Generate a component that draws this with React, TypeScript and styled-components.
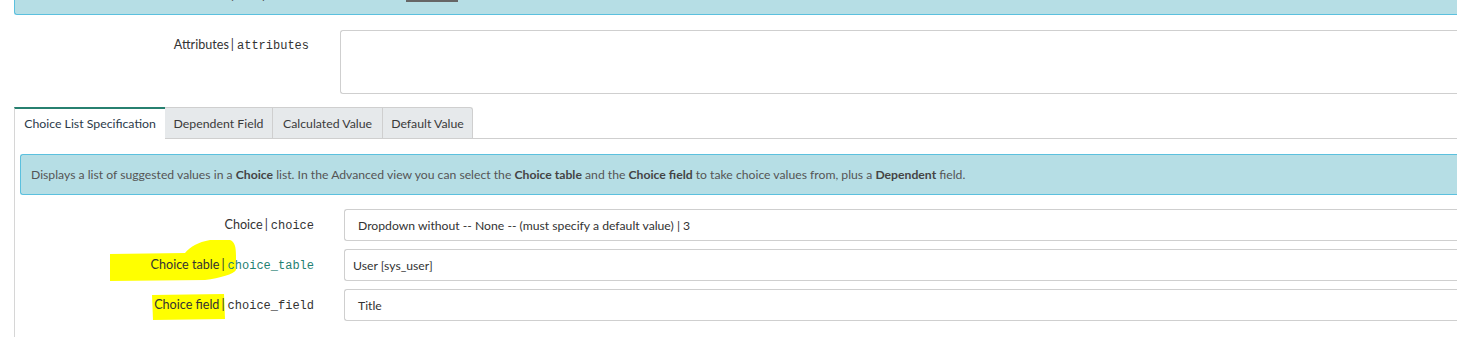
import React from "react";
import styled, { createGlobalStyle } from "styled-components";

const Global = createGlobalStyle`
  html, body { margin: 0; padding: 0; background: #fff; overflow: hidden; }
  body { font-family: Lato, "Noto Sans", "Liberation Sans", sans-serif; color: #333; }
`;

const Page = styled.div`
  width: 1490px;
  height: 337px;
  overflow: hidden;
  display: flex;
  flex-direction: column;
`;

const TopAlert = styled.div`
  flex: none;
  margin-left: 14px;
  height: 14px;
  background: #b6dee5;
  border-left: 1px solid #5bc0de;
  border-bottom: 1px solid #5bc0de;
  border-bottom-left-radius: 3px;
  display: flex;
  align-items: flex-end;
  padding-left: 16px;
  overflow: hidden;
  font-size: 12.2px;
  line-height: 16px;
  color: #555;
  white-space: nowrap;
`;

const TopText = styled.span`
  width: 369px;
  margin-bottom: 11px;
`;

const TopLink = styled.span`
  display: inline-block;
  width: 52px;
  height: 16px;
  border-bottom: 2px solid #666;
  margin-bottom: 12px;
  margin-left: 6px;
`;

const FieldRow = styled.div<{ $labelWidth: number; $gap: number }>`
  display: grid;
  grid-template-columns: ${(p) => p.$labelWidth}px 1fr;
  column-gap: ${(p) => p.$gap}px;
  align-items: start;
`;

const Attrs = styled(FieldRow)`
  flex: none;
  margin-top: 15px;
  padding-left: 14px;
`;

const Label = styled.div<{ $pad: number }>`
  position: relative;
  isolation: isolate;
  text-align: right;
  font-size: 12.6px;
  line-height: 16px;
  padding-top: ${(p) => p.$pad}px;
  color: #333;
  white-space: nowrap;
`;

const Code = styled.span<{ $teal?: boolean }>`
  font-family: "Liberation Mono", "DejaVu Sans Mono", monospace;
  font-size: 12px;
  color: ${(p) => (p.$teal ? "#1f7f72" : "#333")};
`;

const Pipe = styled.span`
  margin: 0 3px 0 2px;
`;

const TextArea = styled.div`
  height: 62px;
  border: 1px solid #cfcfcf;
  border-right: none;
  border-radius: 3px 0 0 3px;
  background: #fff;
`;

const TabStrip = styled.div`
  flex: none;
  margin-top: 13px;
  margin-left: 14px;
  display: flex;
  align-items: flex-end;
  height: 31px;
  border-bottom: 1px solid #cfcfcf;
`;

const Tab = styled.div<{ $active?: boolean; $w: number }>`
  box-sizing: border-box;
  width: ${(p) => p.$w}px;
  height: ${(p) => (p.$active ? 32 : 31)}px;
  margin-bottom: ${(p) => (p.$active ? -1 : 0)}px;
  display: flex;
  align-items: center;
  justify-content: center;
  font-size: 12.3px;
  color: ${(p) => (p.$active ? "#2b3a4a" : "#3a3a3a")};
  background: ${(p) => (p.$active ? "#fff" : "#e6e9eb")};
  border-top: ${(p) => (p.$active ? "2px solid #278070" : "1px solid #cfcfcf")};
  border-left: 1px solid ${(p) => (p.$active ? "#d6d6d6" : "#cfcfcf")};
  border-right: ${(p) => (p.$active ? "none" : "1px solid #cfcfcf")};
  padding-bottom: ${(p) => (p.$active ? 1 : 0)}px;
  &:last-child { border-top-right-radius: 3px; }
  & + & { border-left: none; }
`;

const Panel = styled.div`
  flex: 1;
  margin-left: 14px;
  border-left: 1px solid #d6d6d6;
  padding: 15px 0 20px 5px;
`;

const InfoBox = styled.div`
  height: 39px;
  background: #b6dee5;
  border: 1px solid #5bc0de;
  border-right: none;
  border-radius: 3px 0 0 3px;
  display: flex;
  align-items: center;
  padding-left: 10px;
  font-size: 12.2px;
  color: #555;
  white-space: nowrap;
`;

const B = styled.b`
  font-weight: 700;
  color: #444;
`;

const Fields = styled.div`
  margin-top: 14px;
  display: flex;
  flex-direction: column;
  gap: 8px;
`;

const Input = styled.div<{ $pad: number }>`
  box-sizing: border-box;
  height: 32px;
  border: 1px solid #cfcfcf;
  border-right: none;
  border-radius: 3px 0 0 3px;
  display: flex;
  align-items: center;
  padding-left: ${(p) => p.$pad}px;
  font-size: 12.2px;
  color: #333;
  white-space: nowrap;
`;

const Marked = styled.span`
  position: relative;
`;

const Marker = styled.svg`
  position: absolute;
  z-index: -1;
  pointer-events: none;
`;

export default function App() {
  return (
    <Page>
      <Global />
      <TopAlert>
        <TopText>Attributes defined here will be used by this platform and the</TopText>
        <TopLink />
      </TopAlert>

      <Attrs $labelWidth={295} $gap={31}>
        <Label $pad={7}>
          Attributes<Pipe>|</Pipe>
          <Code>attributes</Code>
        </Label>
        <TextArea />
      </Attrs>

      <TabStrip>
        <Tab $active $w={151}>Choice List Specification</Tab>
        <Tab $w={108}>Dependent Field</Tab>
        <Tab $w={110}>Calculated Value</Tab>
        <Tab $w={90}>Default Value</Tab>
      </TabStrip>

      <Panel>
        <InfoBox>
          <span>
            Displays a list of suggested values in a <B>Choice</B> list. In the Advanced view you can select the{" "}
            <B>Choice table</B> and the <B>Choice field</B> to take choice values from, plus a <B>Dependent</B> field.
          </span>
        </InfoBox>

        <Fields>
          <FieldRow $labelWidth={294} $gap={30}>
            <Label $pad={8}>
              Choice<Pipe>|</Pipe>
              <Code>choice</Code>
            </Label>
            <Input $pad={13}>Dropdown without -- None -- (must specify a default value) | 3</Input>
          </FieldRow>
          <FieldRow $labelWidth={294} $gap={30}>
            <Label $pad={8}>
              <Marked>
                <Marker width="130" height="44" viewBox="0 0 130 44" style={{ left: -41, top: -18 }}>
                  <path
                    d="M0 15 L75 14 C80 8 88 3 100 1 L120 1 C125 3 126 8 126 18 L126 31 C124 35 110 39 95 41 L0 42 Z"
                    fill="#ffff00"
                  />
                </Marker>
                Choice table<Pipe>|</Pipe>
              </Marked>
              <Code $teal>choice_table</Code>
            </Label>
            <Input $pad={8}>User [sys_user]</Input>
          </FieldRow>
          <FieldRow $labelWidth={294} $gap={30}>
            <Label $pad={8}>
              <Marked>
                <Marker width="74" height="26" viewBox="0 0 74 26" style={{ left: -2, top: -3 }}>
                  <path d="M0 1 L72 0 L73 25 L1 26 Z" fill="#ffff00" />
                </Marker>
                Choice field<Pipe>|</Pipe>
              </Marked>
              <Code>choice_field</Code>
            </Label>
            <Input $pad={13}>Title</Input>
          </FieldRow>
        </Fields>
      </Panel>
    </Page>
  );
}
